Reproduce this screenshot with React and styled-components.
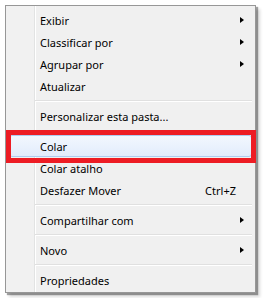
import styled, { createGlobalStyle, css } from "styled-components";

const GlobalStyle = createGlobalStyle`
  html, body {
    margin: 0;
    padding: 0;
    background: #ffffff;
  }
`;

const Page = styled.div`
  padding: 5px;
  font-family: "Segoe UI", "Noto Sans", "Liberation Sans", sans-serif;
  font-size: 11px;
  color: #000000;
`;

const Menu = styled.div`
  position: relative;
  width: 243px;
  padding: 3px 3px 1px 3px;
  border: 1px solid #979797;
  background: linear-gradient(
    to right,
    #f1f1f1 28px,
    #e2e3e3 28px,
    #e2e3e3 29px,
    #ffffff 29px,
    #ffffff 30px,
    #f0f0f0 30px
  );
  box-shadow: 2px 2px 1px rgba(0, 0, 0, 0.35), 4px 4px 3px rgba(0, 0, 0, 0.15);
  display: flex;
  flex-direction: column;
`;

const Row = styled.div`
  position: relative;
  box-sizing: border-box;
  height: 22px;
  display: flex;
  align-items: center;
  padding-left: 31px;
  white-space: nowrap;

  ${(p) =>
    p.$active &&
    css`
      border: 1px solid #aeccf0;
      border-radius: 3px;
      padding-left: 30px;
      background: linear-gradient(#f2f7fe, #e2ecfc);

      &::after {
        content: "";
        position: absolute;
        left: -4px;
        right: -5px;
        top: -6px;
        bottom: -7px;
        border: 5px solid #ed1c24;
      }
    `}
`;

const Label = styled.span`
  flex: 1;
`;

const Shortcut = styled.span`
  margin-right: 16px;
`;

const Arrow = styled.span`
  width: 0;
  height: 0;
  margin-right: 8px;
  border-top: 3.5px solid transparent;
  border-bottom: 3.5px solid transparent;
  border-left: 4px solid #000000;
`;

const Separator = styled.div`
  height: 8px;
  display: flex;
  flex-direction: column;
  justify-content: center;
  margin-left: 26px;

  &::before {
    content: "";
    height: 1px;
    background: #e0e0e0;
  }
  &::after {
    content: "";
    height: 1px;
    background: #ffffff;
  }
`;

const items = [
  { label: "Exibir", sub: true },
  { label: "Classificar por", sub: true },
  { label: "Agrupar por", sub: true },
  { label: "Atualizar" },
  "sep",
  { label: "Personalizar esta pasta..." },
  "sep",
  { label: "Colar", active: true },
  { label: "Colar atalho" },
  { label: "Desfazer Mover", shortcut: "Ctrl+Z" },
  "sep",
  { label: "Compartilhar com", sub: true },
  "sep",
  { label: "Novo", sub: true },
  "sep",
  { label: "Propriedades" },
];

const App = () => (
  <Page>
    <GlobalStyle />
    <Menu>
      {items.map((item, i) =>
        item === "sep" ? (
          <Separator key={i} />
        ) : (
          <Row key={i} $active={item.active}>
            <Label>{item.label}</Label>
            {item.shortcut && <Shortcut>{item.shortcut}</Shortcut>}
            {item.sub && <Arrow />}
          </Row>
        )
      )}
    </Menu>
  </Page>
);

export default App;
